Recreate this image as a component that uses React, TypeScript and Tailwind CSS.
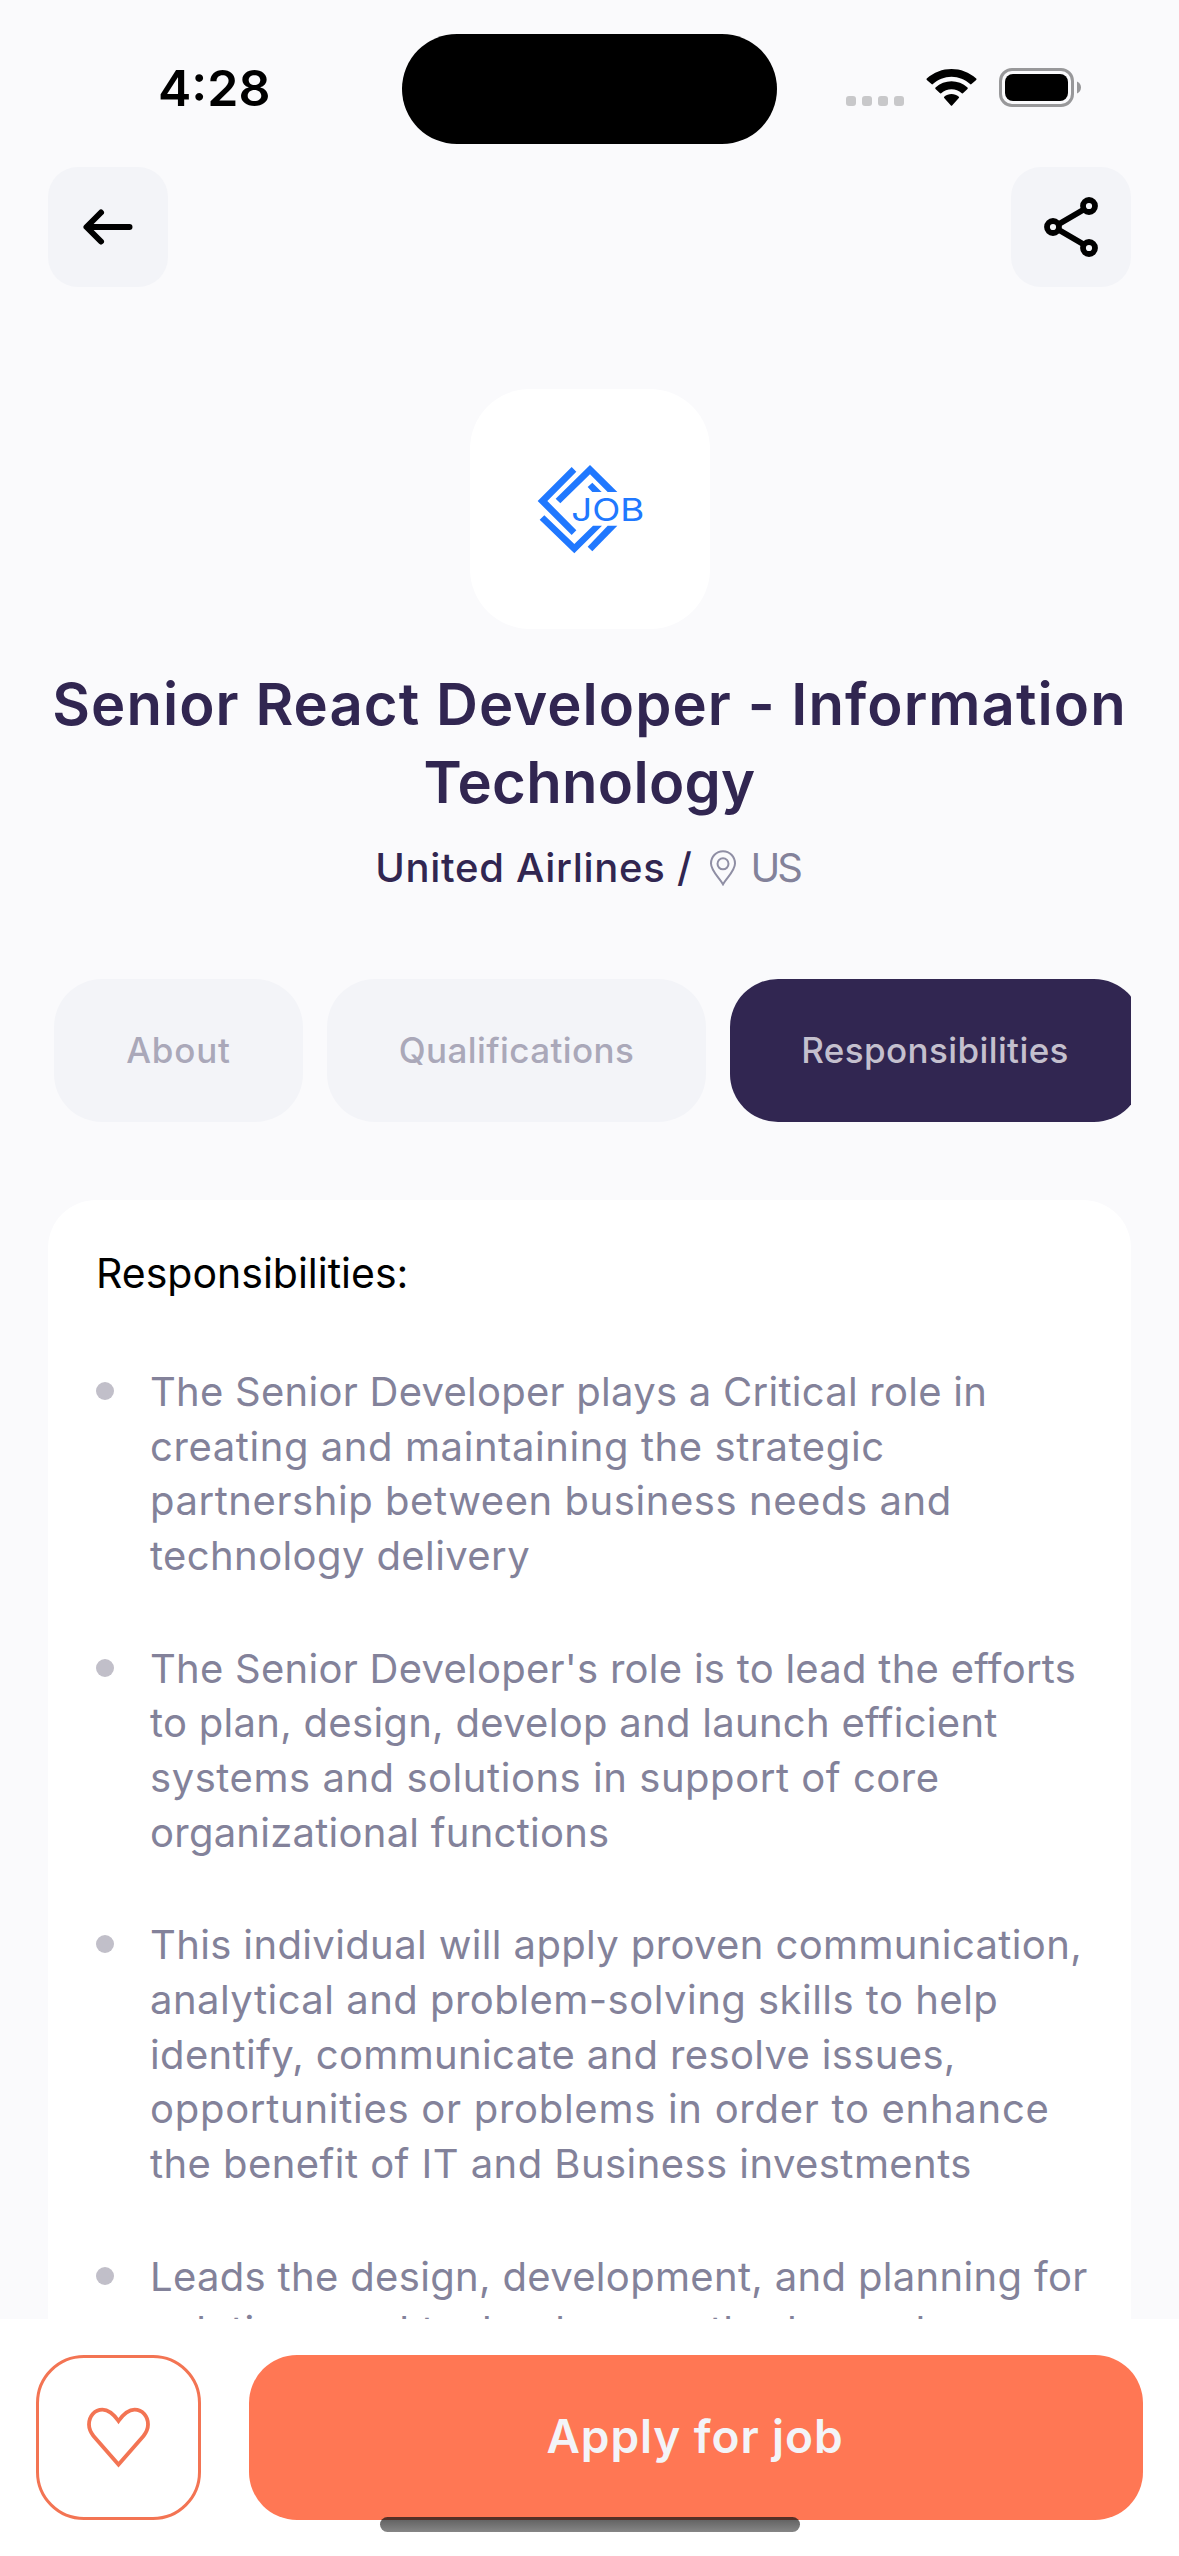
type Line = { text: string; tracking: string };

const RESPONSIBILITIES: Line[][] = [
  [
    { text: "The Senior Developer plays a Critical role in", tracking: "tracking-[0.26px]" },
    { text: "creating and maintaining the strategic", tracking: "tracking-[0.58px]" },
    { text: "partnership between business needs and", tracking: "tracking-[0.56px]" },
    { text: "technology delivery", tracking: "tracking-[0.4px]" },
  ],
  [
    { text: "The Senior Developer's role is to lead the efforts", tracking: "tracking-[0.26px]" },
    { text: "to plan, design, develop and launch efficient", tracking: "tracking-[0.29px]" },
    { text: "systems and solutions in support of core", tracking: "tracking-[0.54px]" },
    { text: "organizational functions", tracking: "tracking-[0.25px]" },
  ],
  [
    { text: "This individual will apply proven communication,", tracking: "tracking-[0.37px]" },
    { text: "analytical and problem-solving skills to help", tracking: "tracking-[0.48px]" },
    { text: "identify, communicate and resolve issues,", tracking: "tracking-[0.35px]" },
    { text: "opportunities or problems in order to enhance", tracking: "tracking-[0.72px]" },
    { text: "the benefit of IT and Business investments", tracking: "tracking-[0.44px]" },
  ],
  [
    { text: "Leads the design, development, and planning for", tracking: "tracking-[0.33px]" },
    { text: "solutions and technology methods used", tracking: "tracking-[0.6px]" },
  ],
];

function StatusBar() {
  return (
    <div className="grid h-[167px] shrink-0 grid-cols-[402px_375px_402px]">
      <div className="pt-[58px] pl-[158px] text-[50px] leading-[60px] font-semibold text-black">4:28</div>
      <div className="mt-[34px] h-[110px] rounded-full bg-black" />
      <div className="flex pl-[69px]">
        <div className="flex gap-[6px] pt-[96px]">
          {[0, 1, 2, 3].map((i) => (
            <span key={i} className="h-[10px] w-[10px] rounded-[3px] bg-[#c8c8ca]" />
          ))}
        </div>
        <svg className="mt-[69px] ml-[22px] h-[37px] w-[51px]" viewBox="0 0 51 37" fill="black">
          <path d="M25.5 7.7C32.6 7.7 39.2 10.5 44.1 15.1C44.5 15.5 45.1 15.5 45.5 15.1L50.2 10.9C50.6 10.5 50.6 10 50.2 9.6C36.4-3.2 14.6-3.2 .8 9.6C.4 10 .4 10.5 .8 10.9L5.5 15.1C5.9 15.5 6.5 15.5 6.9 15.1C11.8 10.5 18.4 7.7 25.5 7.7Z" />
          <path d="M25.5 20.2C29.3 20.2 32.9 21.6 35.8 24.2C36.2 24.6 36.8 24.5 37.2 24.1L41.5 19.9C41.9 19.5 41.9 18.9 41.5 18.5C32.5 10.2 18.5 10.2 9.5 18.5C9.1 18.9 9.1 19.5 9.5 19.9L13.8 24.1C14.2 24.5 14.8 24.6 15.2 24.2C18.1 21.6 21.7 20.2 25.5 20.2Z" />
          <path d="M32.8 29.1C33.2 28.7 33.2 28 32.8 27.7C28.6 24.2 22.4 24.2 18.2 27.7C17.8 28 17.8 28.7 18.2 29.1L24.9 36.4C25.3 36.9 25.7 36.9 26.1 36.4Z" />
        </svg>
        <svg className="mt-[68px] ml-[22px] h-[39px] w-[83px]" viewBox="0 0 83 39">
          <rect x="1.5" y="1.5" width="72" height="36" rx="11.5" fill="none" stroke="#98989a" strokeWidth="3" />
          <rect x="6" y="6" width="63" height="27" rx="8" fill="black" />
          <path d="M78 13.5C80.4 14.5 82 16.8 82 19.5C82 22.2 80.4 24.5 78 25.5Z" fill="#98989a" />
        </svg>
      </div>
    </div>
  );
}

function NavBar() {
  return (
    <div className="flex shrink-0 justify-between px-12">
      <button className="h-[120px] w-[120px] rounded-[30px] bg-[#f3f4f8]">
        <svg viewBox="0 0 120 120" fill="none" stroke="black" strokeWidth="6" strokeLinecap="round" strokeLinejoin="round">
          <path d="M53 45.5L38.5 60L53 74.5M39 60H81.5" />
        </svg>
      </button>
      <button className="h-[120px] w-[120px] rounded-[30px] bg-[#f3f4f8]">
        <svg viewBox="0 0 120 120" fill="none" stroke="black" strokeWidth="5.8">
          <path d="M48 57L72 43M48 63L72 77" />
          <circle cx="42" cy="60" r="6" />
          <circle cx="78" cy="39" r="6" />
          <circle cx="78" cy="81" r="6" />
        </svg>
      </button>
    </div>
  );
}

function CompanyLogo() {
  return (
    <div className="mx-auto mt-[102px] h-[240px] w-[240px] shrink-0 rounded-[60px] bg-white">
      <svg viewBox="90 87 720 720" fill="#2078ff">
        <polygon points="395,321 409,335 322,423 409,511 395,525 293,423" />
        <polygon points="450,315 532,396 503,396 450,343 361,430 347,416" />
        <polygon points="443,381 457,368 485,396 457,396" />
        <polygon points="313,466 403,552 459,497 486,497 403,580 299,479" />
        <polygon points="503,497 532,497 457,574 443,560" />
        <text
          x="394"
          y="482"
          fontSize="94"
          fontWeight="400"
          fontFamily="Inter, sans-serif"
          textLength="219"
          lengthAdjust="spacingAndGlyphs"
        >
          JOB
        </text>
      </svg>
    </div>
  );
}

function JobHeading() {
  return (
    <div className="flex shrink-0 flex-col items-center pt-[36px] text-[#312651]">
      <h1 className="text-center text-[58px] leading-[78px] font-semibold whitespace-nowrap">
        <span className="block tracking-[1.07px]">Senior React Developer - Information</span>
        <span className="block tracking-[0.3px]">Technology</span>
      </h1>
      <div className="mt-[22px] mr-[4px] flex h-[50px] items-center text-[40px] leading-[50px]">
        <span className="font-medium tracking-[0.7px]">United Airlines /</span>
        <svg className="ml-[17px] h-[36px] w-[28px]" viewBox="0 0 28 36" fill="none" stroke="#8f8ea4" strokeWidth="2">
          <path d="M14 34.3C11 28.5 2 21 2 13.5A12 12.3 0 0 1 26 13.5C26 21 17 28.5 14 34.3Z" />
          <circle cx="14" cy="13.8" r="5.5" />
        </svg>
        <span className="ml-[13px] tracking-[-3px] text-[#83829a]">US</span>
      </div>
    </div>
  );
}

function Tabs() {
  const base = "flex h-[143px] shrink-0 items-center justify-center rounded-[48px] text-[35px] leading-none font-medium";
  return (
    <div className="mx-12 mt-[86px] flex shrink-0 gap-6 overflow-hidden pl-[6px]">
      <button className={`${base} w-[249px] bg-[#f3f4f8] tracking-[0.8px] text-[#aaa8b9]`}>About</button>
      <button className={`${base} w-[379px] bg-[#f3f4f8] tracking-[0.4px] text-[#aaa8b9]`}>Qualifications</button>
      <button className={`${base} w-[412px] bg-[#312651] pr-[2px] tracking-[0.4px] text-[#c4c0ce]`}>Responsibilities</button>
    </div>
  );
}

function DetailsCard() {
  return (
    <section className="mx-12 mt-[78px] shrink-0 rounded-[48px] bg-white px-12 pt-[48px] pb-12">
      <h2 className="text-[41px] leading-[50px] text-black">Responsibilities:</h2>
      <ul className="mt-[67px] flex flex-col gap-[57.8px]">
        {RESPONSIBILITIES.map((lines, i) => (
          <li key={i} className="flex">
            <span className="mt-[17px] h-[18px] w-[18px] shrink-0 rounded-full bg-[#c1bfc9]" />
            <p className="ml-[36px] text-[40px] leading-[54.7px] whitespace-nowrap text-[#83829a]">
              {lines.map((line) => (
                <span key={line.text} className={`block ${line.tracking}`}>
                  {line.text}
                </span>
              ))}
            </p>
          </li>
        ))}
      </ul>
    </section>
  );
}

function ActionBar() {
  return (
    <footer className="relative flex h-[237px] shrink-0 gap-12 bg-white px-9 pt-9">
      <button className="h-[165px] w-[165px] shrink-0 rounded-[48px] border-3 border-[#f37453]">
        <svg className="-m-[3px] h-[165px] w-[165px]" viewBox="0 0 165 165" fill="none" stroke="#f37453" strokeWidth="3.8">
          <path d="M82.5 66C77.5 59 72.5 54.7 66.5 54.7C58.5 54.7 53 61.5 53 69.5C53 74 54.8 77.5 57.5 81L82.5 109.5L107.5 81C110.2 77.5 112 74 112 69.5C112 61.5 106.5 54.7 98.5 54.7C92.5 54.7 87.5 59 82.5 66Z" />
        </svg>
      </button>
      <button className="h-[165px] w-[894px] rounded-[48px] bg-[#ff7754] pr-[2px] pb-[2px] text-[46px] font-semibold tracking-[0.9px] text-[#f3f4f8]">
        Apply for job
      </button>
      <div className="absolute top-[198px] left-[380px] h-[15px] w-[420px] rounded-full bg-[linear-gradient(to_bottom,#553027_0px,#553027_3px,#646464_3px,#868686_15px)]" />
    </footer>
  );
}

export default function App() {
  return (
    <div className="flex h-[2556px] w-[1179px] flex-col overflow-hidden bg-[#fafafc] font-[Inter,sans-serif]">
      <main className="flex h-[2319px] shrink-0 flex-col overflow-hidden">
        <StatusBar />
        <NavBar />
        <CompanyLogo />
        <JobHeading />
        <Tabs />
        <DetailsCard />
      </main>
      <ActionBar />
    </div>
  );
}
